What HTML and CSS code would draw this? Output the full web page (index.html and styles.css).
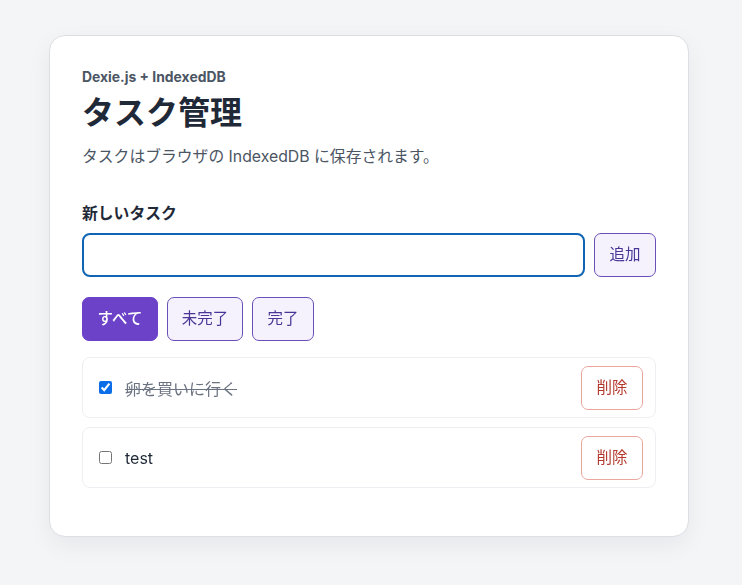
FILE: index.html
```html
<!DOCTYPE html>
<html lang="ja">
<head>
<meta charset="utf-8">
<title>タスク管理</title>
<link rel="stylesheet" href="styles.css">
</head>
<body>
<main class="card">
  <p class="eyebrow">Dexie.js + IndexedDB</p>
  <h1 class="title">タスク管理</h1>
  <p class="desc">タスクはブラウザの IndexedDB に保存されます。</p>

  <label class="label" for="task">新しいタスク</label>
  <div class="add-row">
    <input id="task" class="input" type="text" autofocus>
    <button class="btn btn-soft">追加</button>
  </div>

  <div class="filters">
    <button class="btn btn-primary">すべて</button>
    <button class="btn btn-soft">未完了</button>
    <button class="btn btn-soft">完了</button>
  </div>

  <ul class="list">
    <li class="item">
      <input type="checkbox" class="check" checked>
      <span class="text done">卵を買いに行く</span>
      <button class="btn btn-danger">削除</button>
    </li>
    <li class="item">
      <input type="checkbox" class="check">
      <span class="text">test</span>
      <button class="btn btn-danger">削除</button>
    </li>
  </ul>
</main>
</body>
</html>
```

FILE: styles.css
```css
* { box-sizing: border-box; }
html, body { margin: 0; }
body {
  background: #f4f5f7;
  font-family: Inter, "Noto Sans CJK JP", "Noto Sans", sans-serif;
  color: #1f2937;
  padding: 35px 0 48px;
}
.card {
  width: 640px;
  margin: 0 0 0 49px;
  background: #ffffff;
  border: 1px solid #dcdfe3;
  border-radius: 16px;
  padding: 32px 32px 48px;
  box-shadow: 0 8px 24px rgba(15, 23, 42, 0.06);
}
.eyebrow {
  margin: 0;
  font-size: 13.9px;
  line-height: 18px;
  font-weight: 700;
  color: #4b5563;
}
.title {
  margin: 8px 0 0;
  font-size: 32px;
  line-height: 38px;
  font-weight: 700;
  color: #1f2937;
}
.desc {
  margin: 13px 0 0;
  font-size: 15.8px;
  line-height: 24px;
  color: #4b5563;
}
.label {
  display: block;
  margin-top: 34px;
  font-size: 15.8px;
  line-height: 22px;
  font-weight: 700;
  color: #1f2937;
}
.add-row {
  display: flex;
  align-items: center;
  gap: 9px;
  margin-top: 8px;
}
.input {
  flex: 1;
  height: 44px;
  border: 2px solid #0f64b4;
  border-radius: 8px;
  padding: 0 11px;
  font: inherit;
  font-size: 15px;
  outline: none;
  caret-color: #111;
}
.btn {
  font-family: inherit;
  font-size: 15.5px;
  line-height: 20px;
  border-radius: 7px;
  padding: 0;
  cursor: pointer;
  background: transparent;
}
.btn-soft {
  height: 44px;
  background: #f5f2fe;
  border: 1px solid #6a4fb6;
  color: #4a3596;
}
.add-row .btn-soft { width: 62px; }
.filters {
  display: flex;
  gap: 9px;
  margin-top: 20px;
}
.filters .btn { height: 44px; }
.btn-primary {
  width: 76px;
  background: #6b42c8;
  border: 1px solid #6b42c8;
  color: #ffffff;
  font-weight: 500;
}
.filters .btn-soft:nth-child(2) { width: 76px; }
.filters .btn-soft:nth-child(3) { width: 62px; }
.list {
  list-style: none;
  margin: 16px 0 0;
  padding: 0;
  display: flex;
  flex-direction: column;
  gap: 9px;
}
.item {
  display: flex;
  align-items: center;
  height: 61px;
  padding: 0 12px 0 16px;
  border: 1px solid #eceef1;
  border-radius: 8px;
}
.check {
  width: 13px;
  height: 13px;
  margin: 0 13px 0 0;
  accent-color: #0b6ee8;
}
.text {
  flex: 1;
  font-size: 16px;
  color: #1f2937;
}
.text.done {
  color: #6b7280;
  text-decoration: line-through;
}
.btn-danger {
  width: 62px;
  height: 44px;
  background: #ffffff;
  border: 1px solid #e9a79e;
  color: #b3392d;
}
```
